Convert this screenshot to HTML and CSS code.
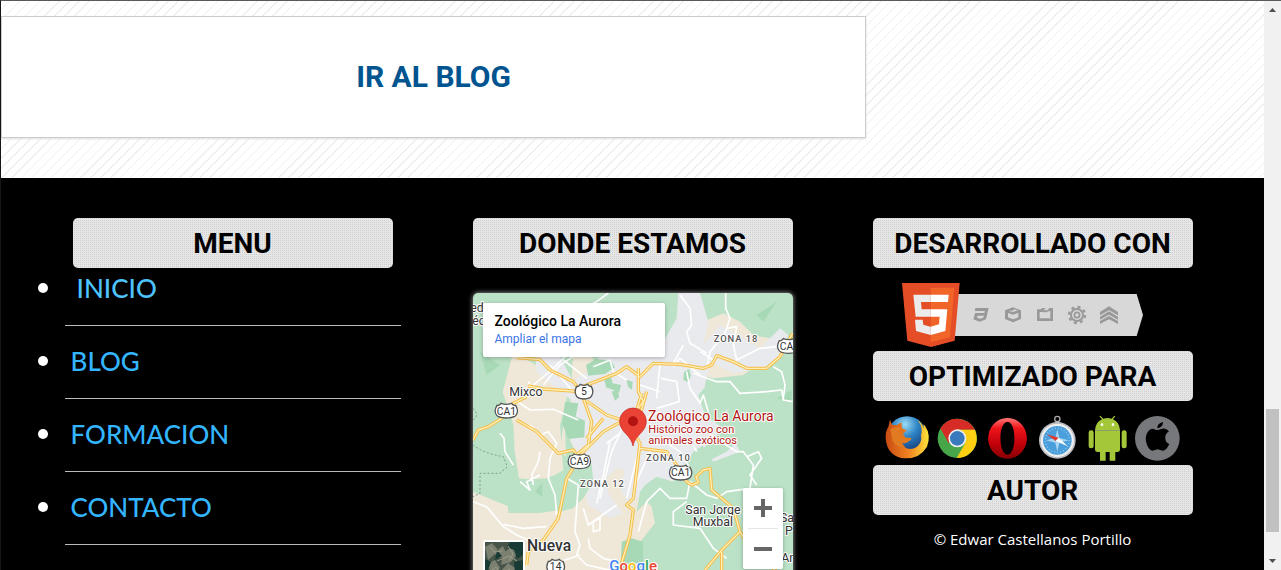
FILE: index.html
```html
<!DOCTYPE html>
<html lang="es">
<head>
<meta charset="utf-8">
<title>Zoológico La Aurora</title>
<link rel="stylesheet" href="styles.css">
</head>
<body>
<div class="window">
  <div class="page">
    <main class="content">
      <a class="blog-link" href="#blog">IR AL BLOG</a>
    </main>
    <footer class="footer">
      <section class="column">
        <h2 class="title">MENU</h2>
        <ul class="menu">
          <li><a class="current" href="#inicio">INICIO</a></li>
          <li><a href="#blog">BLOG</a></li>
          <li><a href="#formacion">FORMACION</a></li>
          <li><a href="#contacto">CONTACTO</a></li>
        </ul>
      </section>

      <section class="column">
        <h2 class="title">DONDE ESTAMOS</h2>
        <div class="map">
          <svg class="map-canvas" viewBox="39 24 960 900" aria-label="Mapa">
            <rect x="39" y="24" width="960" height="900" fill="#bbe2c6"/>
            <!-- terrain -->
            <g fill="#efe8d8">
              <path d="M165 190L340 200L330 360L310 420L300 500L350 540L338 670L240 682L146 682L144 664L39 620V924H470L520 740L600 560L380 190Z"/>
              <path d="M160 200L128 320L160 420L164 500L178 586L260 580L310 560L300 420L330 300Z"/>
              <path d="M640 130L680 60L730 110L790 85L840 110L880 150L930 160L940 200L850 270L760 280L680 260L620 180Z"/>
            </g>
            <g fill="#e8eaed">
              <path d="M225 200L300 215L340 290L420 215L610 170L650 100L655 24H720L745 110L730 180L780 120L850 160L900 190L960 130L985 150L960 220L910 250L820 265L750 230L735 300L740 390L790 440L700 500L640 590L560 600L500 680L450 700L385 660L370 600L380 560L310 420L340 350L290 310L230 260Z"/>
              <path d="M718 380L770 340L830 330L790 400L840 500L760 530L720 470Z"/>
            </g>
            <path fill="#efe8d8" d="M440 580l30-30l25 5l-15 55l35 65l-20 20l-50-70zM340 220h60l-10 40l-45 20zM520 660l30-20l25 25l10 50l-60 75l-20-20z"/>
            <g fill="#bbe2c6">
              <path d="M555 600L590 575L640 590L690 600L680 660L630 640L590 620L560 650L530 680L540 620Z"/>
              <path d="M715 330L740 300L800 310L850 335L830 350L790 385L840 460L800 500L740 530L720 500L790 430L735 390Z"/>
              <path d="M315 430L345 500L395 540L400 590L370 640L338 670L300 680L290 640L305 590L320 560Z"/>
              <path d="M144 664L170 580L260 585L310 555L335 600L338 670L240 684L146 684Z"/>
            </g>
            <g fill="#a8d9b6">
              <path d="M315 350l40 5l-8 40l28 12l-2 50l-48 5l-18-45zM433 285l20-10l5 20l25 5l-5 22l-40-15zM455 320l20-8l2 25l-12 10zM500 285l18 5l-2 25l-12-10zM378 240l30-18l45 5l12 20l-30 20l-50 5zM672 262l15-10l6 20l-8 20l-15-8zM485 770l30-10l34 10v154h-70z"/>
              <path d="M890 90L950 50L910 110ZM225 620l22-28v45zM60 200l60 40l-40 30zM950 340l45-25v35z"/>
            </g>
            <!-- minor roads -->
            <g fill="none" stroke="#fff" stroke-width="5" stroke-linejoin="round">
              <path d="M250 300L300 240L340 215M205 290L215 305L280 250L330 200M165 345L210 375L280 373L355 405M340 320L270 240M310 225L380 280"/>
              <path d="M445 24L410 50L370 68L320 80M400 245L450 225L460 260L500 285"/>
              <path d="M660 30L690 70L695 120L680 140L690 175L740 205M670 180L640 235M797 24V70L810 100L795 145L750 200L740 250M800 130L830 125L820 180L830 225L900 190L950 185"/>
              <path d="M600 235L590 340M540 300L600 320M603 280L650 290L658 350L590 370M680 260L690 310L720 355L730 330L745 380M700 265L770 290L810 290L840 325L920 320L965 315L970 345L998 350M940 245L965 260L975 300L970 340M720 200L760 225M640 245L660 220L720 270"/>
              <path d="M120 445L132 460L135 500L160 540M210 420L240 450L265 440L290 475L270 520L265 580L285 630L290 690M180 590L210 615L200 590L240 570M220 600L215 570L235 530L240 500M320 580L355 600L345 740L360 780L350 810L380 840L470 860M39 650L80 665L130 725L170 750L260 790M130 718L190 730L260 725M385 760L390 790L430 820L470 830M400 710L420 700L420 735L400 740ZM370 670L385 720L470 660M300 830L360 810"/>
              <path d="M420 640L455 500L500 400M410 655L430 570L450 470M500 640L540 480M525 600L570 500M440 475L480 445"/>
              <path d="M535 740L560 650L600 610L630 640L680 640L690 590L740 630L770 640L800 620L870 610L880 540L850 500L830 500L750 450M860 515L895 500L905 520L870 570L890 600M680 650L640 680L640 720L720 730L760 790L800 820"/>
              <path d="M600 460L660 500L690 550M700 480L710 500M480 430L600 380M560 420L620 440"/>
            </g>
            <!-- highways: amber casing with a pale core -->
            <defs>
              <path id="hw" d="M170 218L240 224L270 255L340 290L355 310L470 265L500 245L540 275L580 235L660 238L730 250L755 240L770 212L820 230L860 250L920 250L960 215L998 145M370 335L340 318L250 312L205 303M200 335L160 355L125 400L85 425L55 435L39 465M535 250L535 320L550 350L520 390L430 440L370 500L320 580L295 700L250 765L205 800L200 840M170 405L230 440L295 505L340 495L350 510L385 480L395 410L370 340M380 348L440 390L500 410L540 475L520 640L500 660L520 675L510 750L480 850M540 490L620 500L650 540L680 590L695 600L715 592L708 575L730 555L750 550L755 615L820 670L840 740L790 790L735 855M840 740L870 790L950 860M785 800V860M545 325L530 375M560 320L540 390M380 460L430 400"/>
            </defs>
            <g fill="none" stroke-linejoin="round">
              <use href="#hw" stroke="#f5bd4b" stroke-width="10"/>
              <use href="#hw" stroke="#ffefb5" stroke-width="4"/>
            </g>
            <path d="M39 480Q70 505 130 515L142 545L120 565L60 565V625L39 635M39 370Q60 390 39 405" fill="none" stroke="#7f9a89" stroke-width="3" stroke-dasharray="6 6"/>
            <!-- route shields -->
            <g class="shield">
              <path d="M350 304q6 2 11-6q11 6 22 0q5 8 11 6q8 16 2 26q-3 11-24 12q-21-1-24-12q-6-10 2-26z"/><text x="372" y="331">5</text>
              <path id="ca" d="M111 361q7 2 12-6q16 6 32 0q5 8 12 6q9 16 3 26q-3 11-31 12q-28-1-31-12q-6-10 3-26z"/><text x="139" y="389">CA1</text>
              <use href="#ca" x="219" y="152"/><text x="358" y="541">CA9</text>
              <use href="#ca" x="523" y="186"/><text x="662" y="574">CA1</text>
              <use href="#ca" x="847" y="-194"/><text x="959" y="194" class="start">CA9</text>
              <path d="M265 829q6 2 11-6q11 6 22 0q5 8 11 6q8 16 2 26q-3 11-24 12q-21-1-24-12q-6-10 2-26z"/><text x="287" y="856">14</text>
            </g>
            <g class="place">
              <text x="31" y="82">edr</text><text x="37" y="120">éq</text>
              <text x="148" y="332">Mixco</text>
              <text x="676" y="688">San Jorge</text><text x="698" y="724">Muxbal</text>
              <text x="960" y="712">San</text><text x="975" y="750">P</text><text x="964" y="830">An</text>
            </g>
            <g class="zone">
              <text x="761" y="171">ZONA 18</text><text x="360" y="605">ZONA 12</text><text x="558" y="528">ZONA 10</text>
            </g>
            <text class="town" x="201" y="798">Nueva</text>
            <g class="poi">
              <text class="poi-name" x="564" y="408">Zoológico La Aurora</text>
              <text x="565" y="443">Histórico zoo con</text><text x="565" y="476">animales exóticos</text>
            </g>
            <path d="M519 483C514 450 479 442 479 409A40 40 0 0 1 559 409C559 442 524 450 519 483Z" fill="#ea4335" stroke="#c5221f" stroke-width="2"/>
            <circle cx="519" cy="409" r="15" fill="#b31412"/>
            <text class="google" x="448" y="857"><tspan fill="#4285f4">G</tspan><tspan fill="#ea4335">o</tspan><tspan fill="#fbbc04">o</tspan><tspan fill="#4285f4">g</tspan><tspan fill="#34a853">l</tspan><tspan fill="#ea4335">e</tspan></text>
          </svg>
          <div class="place-card">
            <strong>Zoológico La Aurora</strong>
            <a href="#mapa">Ampliar el mapa</a>
          </div>
          <button class="satellite" type="button" aria-label="Vista satélite">
            <svg viewBox="0 0 38 38"><rect width="38" height="38" fill="#465449"/><path d="M0 5l7-4 6 7 5-4 4 9-7 3-5-4-7 6zM18 11l9-6 5 7-6 8-10 3zM2 22l8-4 5 8-7 8zM16 29l7-8 7 5-2 8z" fill="#7b8070"/><path d="M25 0h13v13l-6 4-3-9-7-3zM0 17l6 3-3 8H0zM29 20l9-2v20H27l3-9zM12 8l5 6-7 4z" fill="#193b35"/><path d="M5 5l4 5 8-1M12 19l12-5 8 5M3 31l8-6 5 7 9-5M23 4l5 8-4 7" fill="none" stroke="#9a9b87"/></svg>
          </button>
          <div class="zoom">
            <button type="button" aria-label="Acercar"><svg viewBox="0 0 18 18"><path d="M7 0h4v7h7v4h-7v7H7v-7H0V7h7z"/></svg></button>
            <button type="button" aria-label="Alejar"><svg viewBox="0 0 18 18"><path d="M0 7h18v4H0z"/></svg></button>
          </div>
        </div>
      </section>

      <section class="column">
        <h2 class="title">DESARROLLADO CON</h2>
        <svg class="html5" viewBox="96 24 786 195" role="img" aria-label="HTML5">
          <path d="M250 57H800L819 120L800 183H250Z" fill="#d8d8d8"/>
          <path d="M96 24H269L254 197L183 216L112 197Z" fill="#e44d26"/>
          <path d="M182 38H253L240 187L182 202Z" fill="#f16529"/>
          <path d="M182 59V81H153L155 103H182V125H137L130 59ZM182 155V180L138 168L135 134H158L160 149Z" fill="#ebebeb"/>
          <path d="M182 59H236L234 81H182ZM182 103H232L226 168L182 180V155L207 148L209 125H182Z" fill="#fff"/>
          <g fill="#999">
            <path d="M316 99H356L348 133L329 140L310 133L313 122H322L321 128L331 131L341 127L342 122H313L315 114H343L344 108H314Z"/>
            <path fill-rule="evenodd" d="M405 106L429 97L453 106V132L429 142L405 132ZM414 114L429 119L445 114V127L429 133L414 127ZM415 107L429 111L443 106L433 103L428 107Z"/>
            <path d="M501 103H511L518 99H527L521 106H531L539 99H549V138H501ZM509 111V130H541V109H534L530 112H523L517 111Z" fill-rule="evenodd"/>
            <path d="M690 111L717 94L744 111V121L717 106L690 121ZM690 125L717 109L744 125V134L717 119L690 134ZM690 138L717 123L744 138V147L717 133L690 147Z"/>
          </g>
          <g fill="none" stroke="#999"><circle cx="621" cy="120" r="18" stroke-width="6"/><circle cx="621" cy="120" r="24" stroke-width="7" stroke-dasharray="9 10"/><circle cx="621" cy="120" r="8" stroke-width="5"/></g>
        </svg>

        <h2 class="title">OPTIMIZADO PARA</h2>
        <div class="browsers">
          <svg viewBox="39 27 150 150" role="img" aria-label="Firefox">
            <defs><radialGradient id="ff" cx=".45" cy=".2" r=".8"><stop offset="0" stop-color="#9cdcf5"/><stop offset=".4" stop-color="#2d83c5"/><stop offset="1" stop-color="#102a66"/></radialGradient><linearGradient id="fx" x2="1"><stop stop-color="#c84b12"/><stop offset=".55" stop-color="#f08422"/><stop offset="1" stop-color="#ffe33a"/></linearGradient></defs>
            <circle cx="111" cy="94" r="60" fill="url(#ff)"/>
            <path d="M60 44L55 66Q45 80 47 101Q51 148 94 159Q146 166 171 125Q184 90 165 62L160 58L163 72Q154 52 143 46L151 58Q158 75 153 91Q157 112 141 125Q122 138 103 127L91 116L108 114L122 105L124 99L105 98L98 88L110 76L96 70L94 52L80 61L66 59Z" fill="url(#fx)"/>
            <path d="M61 72L80 65L96 68L88 82L98 86L107 98L124 99L114 109L94 112L107 128Q83 132 68 108Z" fill="#e17a20"/>
          </svg>
          <svg viewBox="189 27 150 150" role="img" aria-label="Chrome">
            <circle cx="262" cy="100" r="59" fill="#48a64a"/>
            <path d="M211 70Q231 40 262 41Q298 43 315 74H262L236 115Z" fill="#d52c25"/><path d="M262 74H315Q331 119 298 146Q282 159 260 159L286 114Z" fill="#fdce12"/>
            <circle cx="262" cy="100" r="27" fill="#eee"/><circle cx="262" cy="100" r="22" fill="#3979bd"/>
          </svg>
          <svg viewBox="339 27 150 150" role="img" aria-label="Opera">
            <defs><linearGradient id="op" x2="0" y2="1"><stop stop-color="#ff7777"/><stop offset=".25" stop-color="#ee151b"/><stop offset=".65" stop-color="#c00009"/><stop offset="1" stop-color="#860004"/></linearGradient></defs>
            <path fill="url(#op)" fill-rule="evenodd" d="M413 39A58 61 0 1 1 412 39ZM413 51C383 51 385 149 413 149C440 149 440 51 413 51Z"/>
          </svg>
          <svg viewBox="9 27 150 150" role="img" aria-label="Safari">
            <circle cx="82" cy="42" r="8" fill="none" stroke="#aaa" stroke-width="4"/><path d="M77 48h11v13H77z" fill="#bbb"/>
            <circle cx="82" cy="106" r="55" fill="#b8bcc1"/><circle cx="82" cy="106" r="50" fill="#eee"/><circle cx="82" cy="106" r="43" fill="#4a9edb"/>
            <circle cx="82" cy="106" r="36" fill="none" stroke="#b8def4" stroke-width="4" stroke-dasharray="2 7"/><path d="M82 72l6 27 28 7-28 7-6 27-6-27-28-7 28-7z" fill="#a8d6f1"/>
            <path d="M50 88L86 98L77 108Z" fill="#e3392d"/><path d="M86 98L113 124L77 108Z" fill="#fff"/>
          </svg>
          <svg viewBox="159 27 150 150" role="img" aria-label="Android">
            <g fill="#a4c639"><path d="M195 75Q197 51 216 43L208 34L211 32L220 41Q232 37 245 41L253 32L256 34L249 43Q268 51 270 75ZM195 78H270V133Q270 141 262 141H256V167H239V141H227V167H210V141H203Q195 141 195 133Z"/><rect x="176" y="76" width="15" height="54" rx="7"/><rect x="275" y="76" width="15" height="54" rx="7"/></g><path d="M195 75h75v3h-75z" fill="#8f9f6a"/><circle cx="216" cy="59" r="4" fill="#fff"/><circle cx="249" cy="59" r="4" fill="#fff"/>
          </svg>
          <svg viewBox="309 27 150 150" role="img" aria-label="Apple">
            <circle cx="382" cy="100" r="67" fill="#77787b"/>
            <path d="M382 75C391 75 394 70 404 71Q411 72 417 79Q404 87 406 101Q407 112 418 117Q409 137 398 137L383 133L367 137Q355 135 349 113C343 91 355 73 366 71C374 71 377 75 382 75ZM382 70Q381 55 399 51Q400 66 382 70Z"/>
          </svg>
        </div>

        <h2 class="title">AUTOR</h2>
        <p class="author">© Edwar Castellanos Portillo</p>
      </section>
    </footer>
  </div>
  <div class="scrollbar" aria-hidden="true">
    <span class="arrow up"></span>
    <span class="track"><span class="thumb"></span></span>
    <span class="arrow down"></span>
  </div>
</div>
</body>
</html>
```

FILE: styles.css
```css
* { box-sizing: border-box; }

body {
  margin: 0;
  color: #fff;
  background: #000;
  font-family: "Open Sans", "Noto Sans", sans-serif;
}

.window {
  display: flex;
  height: 100vh;
  overflow: hidden;
  border-top: 1px solid #5c565e;
  border-left: 1px solid #151515;
}

.page {
  flex: 1;
  min-width: 0;
  overflow: hidden;
}

.content {
  padding: 15px 0 40px;
  background: #fff repeating-linear-gradient(135deg, #fff 0 6px, #efefef 6px 7px);
}

.blog-link {
  display: flex;
  align-items: center;
  justify-content: center;
  width: 68.5%;
  height: 122px;
  padding-bottom: 2px;
  border: 1px solid #ccc;
  background: #fff;
  box-shadow: 0 1px 2px #ddd;
  color: #00548f;
  font: bold 30px Roboto, sans-serif;
  text-decoration: none;
}

.footer {
  display: flex;
  justify-content: center;
  gap: 80px;
  padding: 40px 0;
}

.column { width: 320px; }

.title {
  display: flex;
  align-items: center;
  justify-content: center;
  height: 50px;
  margin: 0;
  border-radius: 5px;
  background: #e6e6e6 conic-gradient(#cfcfcf 25%, transparent 0) 0 0 / 2px 2px;
  color: #000;
  font: bold 28px Roboto, sans-serif;
  white-space: nowrap;
}

.menu {
  margin: 0 -8px;
  padding: 0;
  font: 500 26px/36px Lato, sans-serif;
}

.menu li {
  height: 73px;
  padding-left: 6px;
}

.menu li::marker { font-size: 30px; }

.menu a {
  display: block;
  height: 56px;
  margin-left: -6px;
  padding-left: 6px;
  border-bottom: 1px solid #bbb;
  color: #33b5ff;
  text-decoration: none;
}

.menu .current {
  padding-left: 12px;
  color: #4dc3ff;
}

.map {
  position: relative;
  height: 300px;
  margin-top: 25px;
  overflow: hidden;
  border-radius: 5px;
  box-shadow: 0 0 5px #aaa;
  font-family: Roboto, sans-serif;
}

.map-canvas {
  display: block;
  width: 100%;
  height: 100%;
}

.map-canvas text {
  paint-order: stroke;
  stroke: #fff;
  stroke-width: 6px;
  stroke-linejoin: round;
}

.shield { fill: #fff; stroke: #555; stroke-width: 4px; }
.shield text { fill: #333; font-size: 31px; text-anchor: middle; }
.shield .start { text-anchor: start; }
.place { fill: #333; font-size: 37px; }
.zone { fill: #555; font-size: 28px; font-weight: 500; letter-spacing: 3px; }
.town { fill: #333; font-size: 47px; font-weight: 500; }
.poi { fill: #b31412; font-size: 33px; }
.poi-name { font-size: 42px; }
.google { font-size: 45px; font-weight: 500; }

.place-card {
  position: absolute;
  top: 10px;
  left: 10px;
  display: flex;
  flex-direction: column;
  width: 182px;
  height: 54px;
  padding: 9px 12px;
  border-radius: 2px;
  background: #fff;
  box-shadow: 0 1px 4px #0004;
  color: #000;
}

.place-card strong { font-size: 14px; font-weight: 500; line-height: 18px; }
.place-card a { color: #3974e8; font-size: 12px; line-height: 18px; text-decoration: none; }

.satellite {
  position: absolute;
  top: 247px;
  left: 10px;
  width: 42px;
  height: 42px;
  padding: 0;
  border: 2px solid #fff;
  border-radius: 2px;
  background: #344;
}

.satellite svg { display: block; }

.zoom {
  position: absolute;
  top: 195px;
  right: 10px;
  width: 40px;
  padding: 0 5px;
  border-radius: 2px;
  background: #fff;
  box-shadow: 0 1px 4px #0004;
}

.zoom button {
  display: flex;
  align-items: center;
  justify-content: center;
  width: 30px;
  height: 40px;
  padding: 0;
  border: 0;
  background: none;
}

.zoom button + button { height: 41px; border-top: 1px solid #e6e6e6; }
.zoom svg { width: 18px; height: 18px; fill: #666; }

.html5 {
  display: block;
  width: 262px;
  height: 65px;
  margin: 15px auto 3px;
}

.browsers {
  display: flex;
  justify-content: center;
  margin: 13px 0 1px;
}

.browsers svg { width: 50px; height: 50px; }

.author {
  margin: 14px 0;
  font-size: 15px;
  line-height: 20px;
  text-align: center;
}

.scrollbar {
  display: flex;
  flex-direction: column;
  align-items: center;
  width: 17px;
  background: #f1f1f1;
}

.track {
  display: flex;
  flex: 1;
  flex-direction: column;
  justify-content: flex-end;
  padding-bottom: 20px;
}

.thumb {
  width: 13px;
  height: 24%;
  background: #c1c1c1;
}

.arrow {
  width: 7px;
  height: 4px;
  margin: 7px 0;
  background: #505050;
}

.up { clip-path: polygon(50% 0, 100% 100%, 0 100%); }
.down { clip-path: polygon(0 0, 100% 0, 50% 100%); }
```
